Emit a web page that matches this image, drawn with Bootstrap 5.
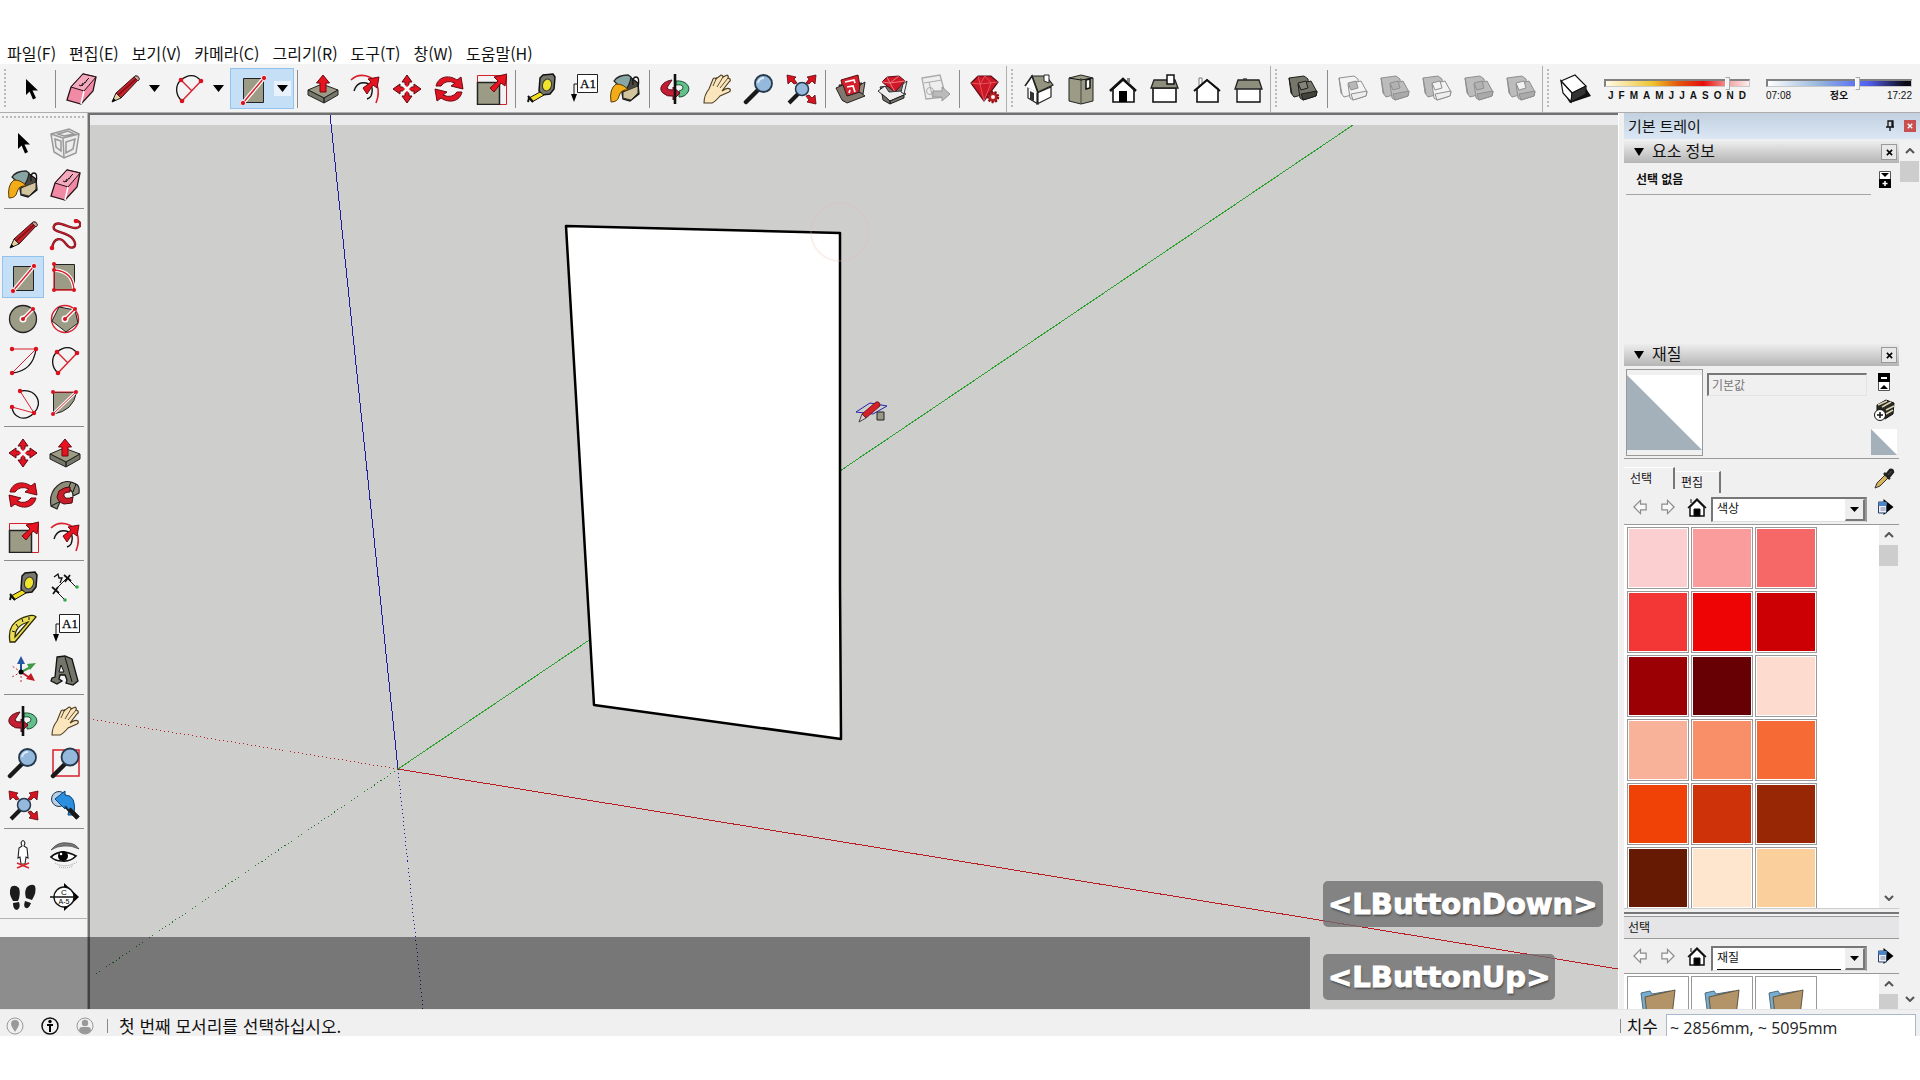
<!DOCTYPE html>
<html lang="ko">
<head>
<meta charset="utf-8">
<meta name="viewport" content="width=device-width, initial-scale=1">
<title>SketchUp</title>
<link href="https://cdn.jsdelivr.net/npm/bootstrap@5.3.0/dist/css/bootstrap.min.css" rel="stylesheet">
<style>
:root{--face:#f3f3f3;--pane:#f1f0f1;--rule:#8c8c8c}
body{font-family:"Noto Sans","Noto Sans CJK KR",sans-serif;color:#111;background:#fff;line-height:1.2;overflow:hidden}
.app{height:100vh;padding:40px 0 44px}
.menubar{height:24px;gap:13px;padding:1px 7px 0;font-family:"Noto Sans CJK KR",sans-serif;font-size:16px}
.menubar a{color:#111;text-decoration:none;line-height:24px}
.toolstrip{height:49px;padding-top:1px;background:var(--face);border-bottom:1px solid #adadad}
.tool{width:42px;height:42px;padding:0;border:0;background:none;flex:none;display:flex;align-items:center;justify-content:center;color:#111}
.tool svg{width:32px;height:32px;overflow:visible}
.split{width:64px;height:41px;flex:none;border:1px solid transparent}
.split .tool{width:43px;height:39px}
.split .drop{width:17px;height:15px;border:0;padding:0;background:none;display:flex;align-items:center;justify-content:center}
.split.active,.palette .tool.active{background:#c5dff6;border:1px solid #93c3ec}
.split.active .drop{background:#e9f2fb}
.vsep{width:8px;height:38px;flex:none;background:linear-gradient(var(--rule),var(--rule)) 3px 0/1px 100% no-repeat}
.grp{width:12px;height:46px;flex:none;border-left:1px solid #b0b0b0}
.vgrip{width:2px;height:40px;background:repeating-linear-gradient(#b9b9b9 0 2px,transparent 2px 4px)}
.hgrip{height:2px;background:repeating-linear-gradient(90deg,#b9b9b9 0 2px,transparent 2px 4px)}
.sun{width:146px;font:bold 10px/12px "Liberation Sans","Noto Sans CJK KR",sans-serif}
.sun input{appearance:none;-webkit-appearance:none;display:block;width:100%;height:14px;margin:0;background:none}
.sun input::-webkit-slider-runnable-track{height:8px;border:1px solid #c9c9c9;border-top:2px solid #808080;border-left:2px solid #808080}
.sun input::-webkit-slider-thumb{-webkit-appearance:none;width:5px;height:13px;margin-top:-4px;background:#f4f4f4;border:1px solid #aaa;border-left-color:#fff}
#month::-webkit-slider-runnable-track{background:linear-gradient(90deg,#fffbe8,#eec22c 33%,#e4590c 50%,#e60d0d 68%,#f3a3a3 86%,#fdecec)}
#hour::-webkit-slider-runnable-track{background:linear-gradient(90deg,#fff,#97b8dc 35%,#5e78f0 60%,#5360ee 70%,#0a0a14 96%)}
.work{min-height:0}
.palette{width:88px;background:var(--face);border-right:1px solid #b5b5b5;flex:none}
.palette .inner{padding:3px 1px 0 2px;border-bottom:1px solid #b5b5b5}
.palette .hgrip{margin:0 2px 4px 0}
.hsep{height:8px;background:linear-gradient(var(--rule),var(--rule)) 2px 2px/80px 1px no-repeat}
.stage{background:#cececd;border-left:2px solid #707070;border-top:2px solid #707070;min-width:0}
.stage .strip{position:absolute;inset:0 0 auto 0;height:10px;background:#ececef}
.stage>svg{position:absolute;inset:0;width:100%;height:100%}
.caption-band{position:absolute;left:0;bottom:0;width:1310px;height:72px;background:rgba(0,0,0,.42)}
.keys{position:absolute;right:317px;bottom:9px;width:280px;gap:27px}
.keycap{background:rgba(110,110,110,.78);border-radius:5px;color:#fff;font:bold 29px/42px "DejaVu Sans",sans-serif;padding:2px 5px;text-shadow:1px 2px 2px rgba(50,50,50,.7);-webkit-text-stroke:1px #fff}
.tray{width:302px;flex:none;background:var(--pane);border-left:1px solid #fff;padding-left:5px}
.tray-title{height:26px;margin-bottom:2px;flex:none;background:linear-gradient(#c2d0df,#dbe7f5);font-size:15px;padding:0 4px 0 4px}
.tray-body{width:275px}
.tray-body>*{flex-shrink:0}
.xbtn{border:1px solid #999;background:#e8e8e8;width:16px;height:16px;padding:0;display:flex;align-items:center;justify-content:center}
.xbtn.hot{background:#c75050;border:0;width:12px;height:12px}
.section-head{height:22px;background:linear-gradient(#ededed,#b5b5b5);font-size:16px;padding:0 2px 0 10px;margin:0;font-weight:400}
.t12{font-size:12px;line-height:16px}
.plain{border:0;background:none;padding:0;display:flex;align-items:center;justify-content:center;flex:none}
.info{height:181px}
.info .rowline{margin-left:2px;height:32px;border-bottom:1px solid #a5a5a5;padding:3px 0 0 10px}
.preview{width:77px;height:87px;border:1px solid #999;padding:5px 0}
.matname{width:160px;height:23px;border:1px solid #e3e3e3;border-top:2px solid #777;border-left:2px solid #777;background:#f1f0f1;font-size:12px;padding:0 3px;color:#777}
.mat{height:93px;padding:3px 0 0 2px;border-bottom:1px solid #999}
.tabsrow{height:31px;padding-top:8px}
.tabsrow a{color:#111;text-decoration:none;padding:0 6px;height:22px;border-right:2px solid #777;border-top:1px solid #fff}
.tabsrow .tab-a{width:51px}.tabsrow .tab-b{width:46px}
.navrow{height:35px;padding:0 5px 0 5px;border-bottom:1px solid #999}
.combo{height:25px;width:156px;border:2px solid #777;border-right-color:#999;border-bottom:1px solid #ddd;background:#fff}
.combo select{appearance:none;-webkit-appearance:none;border:0;background:#fff;font-size:12px;padding:0 0 0 4px;flex:1;min-width:0;color:#111;outline:0;height:22px}
.combo .arrow{width:20px;border:1px solid #eee;border-right:2px solid #777;border-bottom:2px solid #777;background:#eee}
.combo.focused select{border-bottom:1px solid #111;margin:0 4px 0 4px;padding:0}
.well{background:#fff;overflow:hidden}
.well-main{height:383px}
.well.well-rest{flex:1 1 0;min-height:0}
.splitter{height:8px;border-top:1px solid #ccc}
.splitter div{height:2px;background:#777}
.subhead{height:23px;background:#e5e4e6;border-top:1px solid #999;border-bottom:1px solid #999}
.swatches{width:195px;padding:2px 0 0 3px;gap:2px;align-content:flex-start}
.sw{width:62px;height:62px;border:1px solid #999;padding:1px;background:#fff;flex:none}
.sw span{display:block;width:100%;height:100%}
.bar{width:20px;background:#f1f1f1;flex:none}
.bar .thumb{width:19px;height:21px;background:#cdcdcd}
.bar .end{height:20px;flex:none}
.status{height:27px;padding-top:5px;background:var(--pane);border-top:1px solid #e5e5e5;font-family:"Noto Sans CJK KR",sans-serif;overflow:hidden}
.status .icons{gap:17px;padding-left:6px}
.status .msg{font-size:17px;line-height:26px}
.status .tick{width:1px;height:14px;background:#888;margin:0 11px 0 13px}
.status .tick.end{margin:0 6px}
.status input{width:250px;height:28px;border:1px solid #a9b9cc;background:#fff;font:16px/24px "Open Sans",sans-serif;padding:0 3px;color:#222}
.s{fill:none;stroke:#111}.r{fill:none;stroke:#d8202c}.rd{fill:#d8121e}.tp{fill:#9c9c86;stroke:#222}
.sol-on{--a:#77766a;--b:#77766a;--c:#44433b;--d:#85847a;--k:#1d1d1a}
.sol-int{--a:#f3f3f3;--b:#f3f3f3;--c:#eee;--d:#b8b8b8;--k:#8f8f8f}
.sol-uni{--a:#bcbcbc;--b:#bcbcbc;--c:#aaa;--d:#b2b2b2;--k:#8f8f8f}
.sol-sub{--a:#bcbcbc;--b:#f3f3f3;--c:#eee;--d:#f3f3f3;--k:#8f8f8f}
.sol-spl{--a:#bcbcbc;--b:#bcbcbc;--c:#aaa;--d:#f3f3f3;--k:#8f8f8f}
</style>
<script src="https://cdn.jsdelivr.net/npm/bootstrap@5.3.0/dist/js/bootstrap.bundle.min.js"></script>
</head>
<body>
<svg width="0" height="0" class="position-absolute" aria-hidden="true">
<defs>
<symbol id="i-sel" viewBox="0 0 32 32"><path d="M11 6V22l3.600-3.500L18 26.500l3-1.500-3.500-7.500h5.500z"/></symbol>
<symbol id="i-eraser" viewBox="0 0 32 32"><path d="M18 1l13 3-3 14-12 13L2 27l4-13z" fill="#f08aa5" stroke="#2a1218" stroke-width="1.300"/><path d="M18 1l13 3-12 14-13-4z" fill="#f4a9bd" stroke="#2a1218"/><path d="M19 18l-3 13" stroke="#fff" stroke-width="1.500"/><path d="M14 12l2 1 2-3m-1 3l3-4m0 1l2-3m-1 1l3-3" class="s" stroke="#702"/></symbol>
<symbol id="i-pencil" viewBox="0 0 32 32"><path d="M7 20L26 3q3-1 4 3L12 25z" fill="#c6202b" stroke="#2a1010"/><path d="M3 29l4-9 5 5z" fill="#e5cf9d" stroke="#222"/><path d="M3 29l1.500-4 2.500 2.500z"/><path d="M9 22L27 6" stroke="#7b0f15" stroke-width="1.500"/><path d="M25 4l4 4 1.500-2q-1-4-4-3z" fill="#d99" stroke="#333"/></symbol>
<symbol id="i-free" viewBox="0 0 32 32"><path id="fr" d="M3 29C5 18 12 18 17 25S30 28 24 20 2 14 5 7s15 3 22 2 4-7 1-7" fill="none" stroke="#7d1420" stroke-width="2.400"/><path d="M3 29C5 18 12 18 17 25S30 28 24 20 2 14 5 7s15 3 22 2 4-7 1-7" fill="none" stroke="#d8202c"/><circle class="rd" cx="3" cy="29" r="2.300"/><circle class="rd" cx="27" cy="2" r="2.300"/></symbol>
<symbol id="i-arc" viewBox="0 0 32 32"><path d="M9 28C2 22 2 12 8 7S22 0 28 8" class="s" stroke-width="1.300"/><path d="M8 7l11 11M28 8L9 28" class="r" stroke-width="1.400"/><g class="rd"><circle cx="8" cy="7" r="2.300"/><circle cx="28" cy="8" r="2.300"/><circle cx="9" cy="28" r="2.300"/></g></symbol>
<symbol id="i-rect" viewBox="0 0 32 32"><path class="tp" d="M6.500 5.500h20v24h-20z"/><path d="M6 30L27 5" stroke="#fff" stroke-width="4"/><path d="M6 30L27 5" class="r" stroke-width="1.500"/><g class="rd" stroke="#fff" stroke-width=".8"><circle cx="6" cy="30" r="2.600"/><circle cx="27" cy="5" r="2.600"/></g></symbol>
<symbol id="i-rrect" viewBox="0 0 32 32"><path class="tp" d="M5.500 3.500h20v25h-20z"/><path d="M5 9q19 1 20 20" fill="none" stroke="#fff" stroke-width="3.500"/><path d="M5 3v26h20Q24 10 5 9" class="r" stroke-width="1.300"/><g class="rd"><circle cx="5" cy="3" r="2"/><circle cx="5" cy="9" r="2"/><circle cx="5" cy="29" r="2"/><circle cx="25" cy="29" r="2"/></g></symbol>
<symbol id="i-circle" viewBox="0 0 32 32"><circle class="tp" cx="16" cy="16" r="13.500" stroke-width="1.300"/><path d="M16 16L26 6" stroke="#fff" stroke-width="4"/><circle cx="16" cy="16" r="3.500" fill="#fff"/><path d="M16 16L26 6" class="r" stroke-width="1.500"/><circle class="rd" cx="16" cy="16" r="2"/><circle class="rd" cx="26" cy="6" r="2"/></symbol>
<symbol id="i-poly" viewBox="0 0 32 32"><circle class="r" cx="16" cy="16" r="13.500" stroke-width="1.400"/><path class="tp" d="M10 4l16 3 3 13-12 9L3 18z"/><path d="M16 16L26 6" stroke="#fff" stroke-width="4"/><circle cx="16" cy="16" r="3.500" fill="#fff"/><path d="M16 16L26 6" class="r" stroke-width="1.500"/><circle class="rd" cx="16" cy="16" r="2"/><circle class="rd" cx="26" cy="6" r="2"/></symbol>
<symbol id="i-arc1" viewBox="0 0 32 32"><path d="M29 4Q26 26 5 28" class="s" stroke-width="1.300"/><path d="M5 4h24L5 28" class="r"/><g class="rd"><circle cx="5" cy="4" r="2.200"/><circle cx="29" cy="4" r="2.200"/><circle cx="5" cy="28" r="2.200"/></g></symbol>
<symbol id="i-arc3" viewBox="0 0 32 32"><path d="M13 4c16-3 24 12 14 22S6 30 5 20" class="s" stroke-width="1.300"/><path d="M13 4l14 22L5 20" class="r"/><g class="rd"><circle cx="13" cy="4" r="2.200"/><circle cx="5" cy="20" r="2.200"/><circle cx="27" cy="26" r="2.200"/></g></symbol>
<symbol id="i-pie" viewBox="0 0 32 32"><path class="tp" d="M4.500 5.500h23Q24 24 4.500 27z"/><path d="M4 27L27 5" stroke="#fff" stroke-width="3"/><path d="M4 5h23L4 27" class="r"/><g class="rd"><circle cx="4" cy="5" r="2"/><circle cx="27" cy="5" r="2"/><circle cx="4" cy="27" r="2"/></g></symbol>
<symbol id="i-move" viewBox="0 0 32 32"><path d="M16 2l5 7h-3v5h5v-3l7 5-7 5v-3h-5v5h3l-5 7-5-7h3v-5H9v3l-7-5 7-5v3h5V9h-3z" fill="#e01422" stroke="#5a0a10"/><path d="M11 11l10 10m0-10L11 21" stroke="#f7f7f7" stroke-width="2.600"/></symbol>
<symbol id="i-push" viewBox="0 0 32 32"><path d="M1 17l14-6 16 6-14 8z" fill="#9c9c86" stroke="#222"/><path d="M1 17v5l16 8v-5zM31 17v5l-14 8v-5z" fill="#77786a" stroke="#222"/><path d="M13 19V10H9.500L16 2l6.500 8H19v9z" fill="#e8131f" stroke="#6b0a10"/></symbol>
<symbol id="i-rot" viewBox="0 0 32 32"><path d="M3 13C5 4 15 1 24 7l4-3 2 12-12-3 4-3Q13 6 8 13zM29 19C27 28 17 31 8 25l-4 3-2-12 12 3-4 3q9 4 14-3z" fill="#e01422" stroke="#6b0a10"/></symbol>
<symbol id="i-follow" viewBox="0 0 32 32"><path d="M2 27C-1 10 14-3 27 5q4 2 3 9l-6 3q0-7-6-6-9 3-7 12l-3 7z" fill="#8d8d7a" stroke="#222" stroke-width="1.200"/><path d="M22 3l-3 7m8-5l-3 8M2 27l8-4" class="s"/><path d="M10 12q5-4 11-4v5q-7 0-6 4t9 1l-1 6-8 1q-6-2-7-7z" fill="#c81d28" stroke="#4b0a0e"/></symbol>
<symbol id="i-scale" viewBox="0 0 32 32"><path d="M2.500 2.500h29v29h-29z" class="r"/><path class="tp" d="M2.500 9.500h22v22h-22z" stroke-width="1.500"/><path d="M15 15l8-7-4-4L32 1l-2 12-4-3-7 9z" fill="#e8131f" stroke="#6b0a10"/></symbol>
<symbol id="i-off" viewBox="0 0 32 32"><path d="M2 7C10-1 24 2 28 12q3 8-1 18" class="r" stroke-width="1.600"/><path d="M5 18Q8 8 17 10t5 13q-1 2-4 3" class="s" stroke-width="1.400"/><path d="M14 15l8-6-3-3 11-2-2 11-4-3-6 9z" fill="#e8131f" stroke="#6b0a10"/></symbol>
<symbol id="i-tape" viewBox="0 0 32 32"><path d="M15 5l3-3 10-1 2 3-1 12-4 5-8 1-3-4z" fill="#77776e" stroke="#111" stroke-width="1.500"/><ellipse cx="22" cy="12" rx="4.500" ry="6" transform="rotate(15 22 12)" fill="#f1e52c" stroke="#333"/><path d="M15 19l4 3L7 29l-3-4z" fill="#f2dd25" stroke="#111"/><path d="M3 23l5 6m-4-4l-1 4" stroke="#111" stroke-width="2"/></symbol>
<symbol id="i-dim" viewBox="0 0 32 32"><path d="M6 19L18 7M6 19l9 9M18 7l9 9" class="s"/><path d="M3 16l7 6m-6 1l5-7M15 4l7 6m-6 1l5-7" class="s" stroke-width="1.700"/><path d="M5 6l4-3 1 4 3 0-2 5" class="s" stroke-width="1.300"/><circle cx="16" cy="29" r="1.800" fill="#3a4"/><circle cx="28" cy="16" r="1.800" fill="#3a4"/></symbol>
<symbol id="i-prot" viewBox="0 0 32 32"><path d="M3 29Q0 12 13 6T29 4L8 29zM8 24Q8 13 21 9z" fill="#e9dd55" fill-rule="evenodd" stroke="#2b2800" stroke-width="1.300"/><path d="M5 18l3 1m1-8l2 3m4-8l1 3m6-5l0 3" class="s"/></symbol>
<symbol id="i-text" viewBox="0 0 32 32"><path d="M10.500 1.500h20v18h-20z" fill="#fff" stroke="#222"/><path d="M10 11H7v12" class="s"/><path d="M4 21h6l-3 8z"/><text x="13" y="15" font-family="Liberation Serif,serif" font-size="13" stroke="#111" stroke-width=".3">A1</text></symbol>
<symbol id="i-axes" viewBox="0 0 32 32"><path d="M14 17V6" stroke="#1f4f93" stroke-width="2"/><path d="M10 9l4-8 4 8z" fill="#2757a0"/><path d="M14 17l10-5" stroke="#3d9a45" stroke-width="2"/><path d="M20 9l9-1-6 7z" fill="#3d9a45"/><path d="M14 17l9 6" stroke="#c11b25" stroke-width="2"/><path d="M24 18l4 8-9-2z" fill="#c11b25"/><path d="M14 17L5 11M14 17L5 22M14 17v11" stroke="#b33" stroke-dasharray="2 2"/><circle cx="14" cy="17" r="2.500"/></symbol>
<symbol id="i-3d" viewBox="0 0 32 32"><path d="M8 2l8-1 7 3 6 22-5 4-7-2 1-3-2-5h-5l-1 4 3 2-5 3-6-3 1-3 3-1z" fill="#74756a" stroke="#111" stroke-width="1.300"/><path d="M12 10l3 7h-5z" fill="#f3f3f3" stroke="#111"/><path d="M16 2l7 25" class="s"/></symbol>
<symbol id="i-orbit" viewBox="0 0 32 32"><path d="M17 8c10-1 15 6 12 11q-3 5-9 5v-6q5-1 4-4t-7-2z" fill="#63c08b" stroke="#174d2d"/><path d="M13 7C1 9 0 17 4 20q4 4 10 3l0 4 7-7-7-6 0 3q-8 0-5-4z" fill="#c21f35" stroke="#5b0c18"/><path d="M16 1v30" stroke="#111" stroke-width="2.600"/></symbol>
<symbol id="i-hand" viewBox="0 0 32 32"><path d="M3 30q0-8 5-14L12 6q2-2 3 0l5-4q2 0 2 2l4-2q2 1 1 3l2 1q1 2-1 3l-7 9q5-4 8-2 1 2-1 3l-9 4q-5 6-8 7z" fill="#fbe5bd" stroke="#4b3c22" stroke-width="1.100"/><path d="M12 13l4-9m0 10l6-10m-3 11l8-10" stroke="#4b3c22" fill="none" stroke-width=".9"/></symbol>
<symbol id="i-zoom" viewBox="0 0 32 32"><path d="M3 29l12-12" stroke="#191919" stroke-width="4.500" stroke-linecap="round"/><circle cx="20.500" cy="10.500" r="8.500" fill="#94b9dc" stroke="#26384c" stroke-width="1.800"/><path d="M15 10q1-5 6-5" fill="none" stroke="#dceafa" stroke-width="1.800"/></symbol>
<symbol id="i-zwin" viewBox="0 0 32 32"><path d="M4 3h26v26H4z" class="r" stroke-width="1.500"/><path d="M4 29l12-12" stroke="#191919" stroke-width="4.500" stroke-linecap="round"/><circle cx="21" cy="10" r="8.500" fill="#94b9dc" stroke="#26384c" stroke-width="1.800"/></symbol>
<symbol id="i-zext" viewBox="0 0 32 32"><path d="M4 30l9-9" stroke="#191919" stroke-width="4"/><circle cx="17" cy="16" r="6.500" fill="#94b9dc" stroke="#26384c" stroke-width="1.500"/><path d="M2 2l9 2-2 2 3 4-3 1-3-3-3 3zM31 2l-9 2 2 2-3 4 3 1 3-3 3 3zM31 31l-9-2 2-2-3-4 3-1 3 3 3-3z" fill="#d8121e" stroke="#5a0a10" stroke-width=".8"/></symbol>
<symbol id="i-zprev" viewBox="0 0 32 32"><circle cx="10" cy="10" r="7.500" fill="#b5cfe9" stroke="#26384c"/><path d="M15 15l14 14" stroke="#191919" stroke-width="4.500"/><path d="M6 10L16 2v4q12 0 9 20h-6q2-7-3-9v3z" fill="#2b8fe0" stroke="#0d4377"/><path d="M20 20l9 9" stroke="#191919" stroke-width="4.500"/></symbol>
<symbol id="i-person" viewBox="0 0 32 32"><path d="M14 4q2-5 4 0l-1 3 3 2 1 10-2-1-1 7h-4l-1-7-2 1 1-10 3-2z" fill="#fff" stroke="#222" stroke-width="1.100"/><path d="M10 29l12-5M22 29l-12-5" class="r" stroke-width="1.500"/></symbol>
<symbol id="i-eye" viewBox="0 0 32 32"><path d="M2 11Q9 2 19 4q7 0 11 6-8-4-15-3Q8 7 2 11z" fill="#777" stroke="#222" stroke-width=".6"/><path d="M2 18Q12 9 27 17q-6 6-14 5-7 0-11-4z" fill="#fff" stroke="#111" stroke-width="1.700"/><circle cx="14" cy="17" r="5"/><circle cx="12" cy="15" r="1.300" fill="#fff"/><path d="M6 24q10 6 22-1m-18 5q8 2 14-1" fill="none" stroke="#999" stroke-dasharray="1 1"/></symbol>
<symbol id="i-feet" viewBox="0 0 32 32"><path d="M4 6q4-3 8 1 2 6-1 13H6Q1 12 4 6zM20 6q5-4 8-1 2 6-3 14l-6-2q-2-7 1-11zM6 22l6-1q2 6-2 8-4 0-4-7zM18 20l6 2q-2 6-5 5-3-1-1-7z" fill="#1c1c1c"/></symbol>
<symbol id="i-sect" viewBox="0 0 32 32"><path d="M15 2l15 14-15 14z"/><circle cx="15" cy="16" r="10" fill="#fff" stroke="#111" stroke-width="1.300"/><path d="M1 16h26" class="s" stroke-width="1.500"/><text x="15" y="14" text-anchor="middle" font-family="Liberation Sans" font-size="8">C</text><text x="15" y="23" text-anchor="middle" font-family="Liberation Sans" font-size="7">A-5</text></symbol>
<symbol id="i-bucket" viewBox="0 0 32 32"><path d="M11 7l10-3 8 6 1 11-9 7-7-2z" fill="#4a4840" stroke="#111" stroke-width="1.300"/><path d="M14 19l15-6v7l-7 7-8-2z" fill="#d2c49d" stroke="#333"/><path d="M5 8q4-6 14-6l3 2q-1 9-7 14z" fill="#87a5a3" stroke="#222" stroke-width="1.300"/><path d="M2 29q-2-13 5-18 8 0 12 6-7-1-9 6-1 6-8 6z" fill="#f2ac18" stroke="#5b3b05"/><path d="M24 12q-1-8 3-8t2 10" class="s" stroke-width="1.300"/></symbol>
<symbol id="i-comp" viewBox="0 0 32 32"><path d="M2 7l18-5 10 5-3 19-12 5L5 25z" fill="#ececec" stroke="#999" stroke-width="1.500"/><path d="M2 7l12 4 16-4M14 11l1 20M6 12l6 2v10l-5-4zM17 15l9-3-2 10-7 4zM9 7l10-3 6 3-10 2z" fill="none" stroke="#999" stroke-width="1.500"/></symbol>
<symbol id="i-box1" viewBox="0 0 32 32"><path d="M4 12l4 16 18-4 1-14z" fill="#57514c" stroke="#222"/><path d="M6 7l17-5 3 17-16 5z" fill="#d4202c" stroke="#5b0b10"/><path d="M10 9l9-2 1 3M12 14l6-1 2 6M14 20l1-3" fill="none" stroke="#fff" stroke-width="1.700"/><path d="M1 15l7-3 4 11 13-4 5 4-18 7-5-3z" fill="#81776c" stroke="#222"/><path d="M25 12l5-3-2 12-4-2z" fill="#9c8f80" stroke="#222"/></symbol>
<symbol id="i-box2" viewBox="0 0 32 32"><path d="M3 14l5 14 17-4 3-13z" fill="#77716b" stroke="#222"/><path d="M5 9l5-5 12-1 6 5-10 11z" fill="#cf1828" stroke="#5b0b10"/><path d="M5 9l8 1 15-2M13 10l5 9M10 4l3 6 9-7" fill="none" stroke="#f17a80"/><path d="M1 18l7-5 4 6 12-1 5 3-16 7z" fill="#eee" stroke="#333"/><path d="M26 11l4-3-3 13-3-2z" fill="#eee" stroke="#333"/><path d="M5 21l8 7v3l-7-4zM13 28l14-6v3l-14 6z" fill="#77716b" stroke="#222"/></symbol>
<symbol id="i-lay" viewBox="0 0 32 32"><path d="M3 5l18-3 6 22-20 2z" fill="#eee" stroke="#aaa" stroke-width="1.300"/><path d="M5 10l18-3M10 9l4 17" stroke="#aaa"/><circle cx="11" cy="18" r="3.500" fill="none" stroke="#aaa"/><path d="M14 18h9v-4l8 7-8 7v-4h-9z" fill="#bbb" stroke="#999"/></symbol>
<symbol id="i-gem" viewBox="0 0 32 32"><path d="M2 10l7-7h13l7 6-14 19z" fill="#cc1726" stroke="#520911" stroke-width="1.200"/><path d="M2 10l9 1 18-2M11 11l4 17 7-18M9 3l2 8 5-8 6 7" fill="none" stroke="#f06a74" stroke-width=".7"/><circle cx="24" cy="24" r="5" fill="#b22" stroke="#8b1018" stroke-dasharray="2 1.500" stroke-width="2.500"/><circle cx="24" cy="24" r="2" fill="#f3f3f3"/></symbol>
<symbol id="i-iso" viewBox="0 0 32 32"><path d="M5 14l10 5v12L5 25zM14 20l14-6v10l-14 7z" fill="#fff" stroke="#222" stroke-width="1.200"/><path d="M9 3l14 0 7 9-15 7z" fill="#93937f" stroke="#222" stroke-width="1.200"/><path d="M2 13l7-10 6 17" fill="#fff" stroke="#222" stroke-width="1.600"/><path d="M7 18l4 2v8l-4-2z" fill="#333"/><path d="M21 2h5v8l-5-2z" fill="#fff" stroke="#222"/></symbol>
<symbol id="i-top" viewBox="0 0 32 32"><path d="M4 5l12-3 12 3v23l-12 3-12-3z" fill="#9c9c86" stroke="#222"/><path d="M16 5v26" stroke="#444"/><path d="M4 5l12 2 12-2" class="s"/><path d="M21 7l4-1v9l-4 1z" fill="#fff" stroke="#111" stroke-width="1.500"/></symbol>
<symbol id="i-front" viewBox="0 0 32 32"><path d="M6 16v13h21V16L16 7z" fill="#fff" stroke="#111" stroke-width="1.600"/><path d="M3 18L16 6l13 12" class="s" stroke-width="2.600"/><path d="M12 18h8v11h-8z"/><path d="M20 5h3v6l-3-3z" fill="#888"/></symbol>
<symbol id="i-right" viewBox="0 0 32 32"><path d="M4 15h23v14H4z" fill="#fff" stroke="#111" stroke-width="1.600"/><path d="M5 7h21l3 8H2z" fill="#8e8e7c" stroke="#222" stroke-width="1.300"/><path d="M18 2h7v9h-7z" fill="#fff" stroke="#111" stroke-width="1.500"/></symbol>
<symbol id="i-back" viewBox="0 0 32 32"><path d="M8 5h3v8H8z" fill="#fff" stroke="#777"/><path d="M6 16v13h21V16L16 7z" fill="#fff" stroke="#111" stroke-width="1.600"/><path d="M3 18L16 7l13 11" class="s" stroke-width="2"/></symbol>
<symbol id="i-left" viewBox="0 0 32 32"><path d="M10 5h4v3h-4z" fill="#777"/><path d="M4 15h23v14H4z" fill="#fff" stroke="#111" stroke-width="1.400"/><path d="M5 7h21l3 9H2z" fill="#8e8e7c" stroke="#222" stroke-width="1.300"/></symbol>
<symbol id="i-sol" viewBox="0 0 32 32"><path d="M2 5l15-2 4 3 1 14-15 4-3-4z" fill="var(--a)" stroke="var(--k)"/><path d="M2 5l3 16" stroke="var(--k)"/><path d="M11 11l13-3 6 11-1 4-13 4-3-2z" fill="var(--b)" stroke="var(--k)"/><path d="M14 21l16-3-1 5-13 4z" fill="var(--c)" stroke="var(--k)"/><path d="M11 10l8-2 2 7-7 2z" fill="var(--d)" stroke="var(--k)"/></symbol>
<symbol id="i-shade" viewBox="0 0 32 32"><path d="M9 27l-3-8 20-5 6 9-9 3-12 4z" fill="#111"/><path d="M2 8L16 2l11 11-14 7z" fill="#fff" stroke="#111" stroke-width="1.200"/><path d="M2 8l2 12 8 9 1-9z" fill="#fff" stroke="#111" stroke-width="1.200"/><path d="M13 20l14-7v8l-15 8z" fill="#333" stroke="#111"/></symbol>
<symbol id="i-prevn" viewBox="0 0 16 16"><path d="M1 8l7-7v4h6v6H8v4z" fill="#f8f8f8" stroke="#8c8c8c" stroke-width="1.300"/></symbol>
<symbol id="i-nextn" viewBox="0 0 16 16"><path d="M15 8L8 1v4H2v6h6v4z" fill="#f8f8f8" stroke="#8c8c8c" stroke-width="1.300"/></symbol>
<symbol id="i-home" viewBox="0 0 20 20"><path d="M3 10v9h14v-9l-7-7z" fill="#fff" stroke="#111" stroke-width="1.500"/><path d="M1 11L10 2l9 9" class="s" stroke-width="1.500"/><path d="M4 6V2M7 12h6v7H7z" stroke="#111"/></symbol>
<symbol id="i-detail" viewBox="0 0 16 18"><path d="M6 1l10 8-10 8z"/><path d="M1 4h8v11H1z" fill="#eef" stroke="#25415f"/><path d="M1 4h8v4H1z" fill="#4b85c6"/><path d="M3 10h5M3 12h5" stroke="#789"/></symbol>
<symbol id="i-tri" viewBox="0 0 10 6" preserveAspectRatio="none"><path d="M0 0h10L5 6z"/></symbol>
<symbol id="i-x" viewBox="0 0 8 8"><path d="M1 1l6 6M7 1L1 7" fill="none" stroke="currentColor" stroke-width="1.800"/></symbol>
<symbol id="i-up" viewBox="0 0 10 6"><path d="M1 5l4-4 4 4" fill="none" stroke="#555" stroke-width="2"/></symbol>
<symbol id="i-dn" viewBox="0 0 10 6"><path d="M1 1l4 4 4-4" fill="none" stroke="#555" stroke-width="2"/></symbol>
<symbol id="i-diag" viewBox="0 0 76 76" preserveAspectRatio="none"><path d="M0 0h76v76z" fill="#fff"/><path d="M0 0v76h76z" fill="#a4b1bb"/></symbol>
<symbol id="i-folder" viewBox="0 0 36 40"><path d="M1 4l9-2 2 3 18-3-4 26H4z" fill="#79add0" stroke="#4c6b80"/><path d="M5 8l30-7-3 26-24 8z" fill="#b39468" stroke="#60553f"/></symbol>
</defs>
</svg>

<div class="app d-flex flex-column">
<nav class="menubar d-flex flex-shrink-0" aria-label="메뉴">
<a href="#">파일(F)</a><a href="#">편집(E)</a><a href="#">보기(V)</a><a href="#">카메라(C)</a><a href="#">그리기(R)</a><a href="#">도구(T)</a><a href="#">창(W)</a><a href="#">도움말(H)</a>
</nav>

<div class="toolstrip d-flex align-items-center flex-shrink-0" role="toolbar">
<div class="vgrip ms-1 me-1"></div>
<button class="tool" aria-label="선택"><svg><use href="#i-sel"/></svg></button><span class="vsep"></span>
<button class="tool" aria-label="지우기"><svg><use href="#i-eraser"/></svg></button>
<div class="split d-flex align-items-center"><button class="tool" aria-label="선"><svg><use href="#i-pencil"/></svg></button><button class="drop" aria-label="선 메뉴"><svg width="11" height="7"><use href="#i-tri"/></svg></button></div>
<div class="split d-flex align-items-center"><button class="tool" aria-label="호"><svg><use href="#i-arc"/></svg></button><button class="drop" aria-label="호 메뉴"><svg width="11" height="7"><use href="#i-tri"/></svg></button></div>
<div class="split active d-flex align-items-center"><button class="tool" aria-label="직사각형"><svg><use href="#i-rect"/></svg></button><button class="drop" aria-label="도형 메뉴"><svg width="11" height="7"><use href="#i-tri"/></svg></button></div>
<span class="vsep"></span>
<button class="tool" aria-label="밀기/끌기"><svg><use href="#i-push"/></svg></button>
<button class="tool" aria-label="오프셋"><svg><use href="#i-off"/></svg></button>
<button class="tool" aria-label="이동"><svg><use href="#i-move"/></svg></button>
<button class="tool" aria-label="회전"><svg><use href="#i-rot"/></svg></button>
<button class="tool" aria-label="배율"><svg><use href="#i-scale"/></svg></button>
<span class="vsep"></span>
<button class="tool" aria-label="줄자"><svg><use href="#i-tape"/></svg></button>
<button class="tool" aria-label="텍스트"><svg><use href="#i-text"/></svg></button>
<button class="tool" aria-label="페인트통"><svg><use href="#i-bucket"/></svg></button>
<span class="vsep"></span>
<button class="tool" aria-label="궤도"><svg><use href="#i-orbit"/></svg></button>
<button class="tool" aria-label="이동 보기"><svg><use href="#i-hand"/></svg></button>
<button class="tool" aria-label="확대/축소"><svg><use href="#i-zoom"/></svg></button>
<button class="tool" aria-label="범위 확대"><svg><use href="#i-zext"/></svg></button>
<span class="vsep"></span>
<button class="tool" aria-label="3D Warehouse"><svg><use href="#i-box1"/></svg></button>
<button class="tool" aria-label="Extension Warehouse"><svg><use href="#i-box2"/></svg></button>
<button class="tool" aria-label="LayOut"><svg><use href="#i-lay"/></svg></button>
<span class="vsep"></span>
<button class="tool" aria-label="확장 관리자"><svg><use href="#i-gem"/></svg></button>
<div class="grp d-flex align-items-center ps-1"><div class="vgrip"></div></div>
<button class="tool" aria-label="등각투영"><svg><use href="#i-iso"/></svg></button>
<button class="tool" aria-label="상단"><svg><use href="#i-top"/></svg></button>
<button class="tool" aria-label="정면"><svg><use href="#i-front"/></svg></button>
<button class="tool" aria-label="우측"><svg><use href="#i-right"/></svg></button>
<button class="tool" aria-label="후면"><svg><use href="#i-back"/></svg></button>
<button class="tool" aria-label="좌측"><svg><use href="#i-left"/></svg></button>
<div class="grp d-flex align-items-center ps-1"><div class="vgrip"></div></div>
<button class="tool sol-on" aria-label="외부 셸"><svg><use href="#i-sol"/></svg></button>
<span class="vsep"></span>
<button class="tool sol-int" aria-label="교차"><svg><use href="#i-sol"/></svg></button>
<button class="tool sol-uni" aria-label="결합"><svg><use href="#i-sol"/></svg></button>
<button class="tool sol-sub" aria-label="빼기"><svg><use href="#i-sol"/></svg></button>
<button class="tool sol-uni" aria-label="트림"><svg><use href="#i-sol"/></svg></button>
<button class="tool sol-spl" aria-label="분할"><svg><use href="#i-sol"/></svg></button>
<div class="grp d-flex align-items-center ps-1"><div class="vgrip"></div></div>
<button class="tool me-1" aria-label="그림자"><svg><use href="#i-shade"/></svg></button>
<div class="sun ms-1"><input type="range" id="month" min="0" max="100" value="86" aria-label="날짜"><label for="month" class="d-flex justify-content-between px-1"><span>J</span><span>F</span><span>M</span><span>A</span><span>M</span><span>J</span><span>J</span><span>A</span><span>S</span><span>O</span><span>N</span><span>D</span></label></div>
<div class="sun ms-3"><input type="range" id="hour" min="0" max="100" value="63" aria-label="시간"><label for="hour" class="d-flex justify-content-between"><span class="fw-normal">07:08</span><span>정오</span><span class="fw-normal">17:22</span></label></div>
</div>

<div class="work d-flex flex-grow-1 position-relative">
<aside class="palette">
<div class="inner">
<div class="hgrip"></div>
<div class="d-flex flex-wrap">
<button class="tool" aria-label="선택"><svg><use href="#i-sel"/></svg></button><button class="tool" aria-label="구성 요소"><svg><use href="#i-comp"/></svg></button>
<button class="tool" aria-label="페인트통"><svg><use href="#i-bucket"/></svg></button><button class="tool" aria-label="지우기"><svg><use href="#i-eraser"/></svg></button>
</div><div class="hsep"></div><div class="d-flex flex-wrap">
<button class="tool" aria-label="선"><svg><use href="#i-pencil"/></svg></button><button class="tool" aria-label="자유 곡선"><svg><use href="#i-free"/></svg></button>
<button class="tool active" aria-label="직사각형"><svg><use href="#i-rect"/></svg></button><button class="tool" aria-label="회전 직사각형"><svg><use href="#i-rrect"/></svg></button>
<button class="tool" aria-label="원"><svg><use href="#i-circle"/></svg></button><button class="tool" aria-label="다각형"><svg><use href="#i-poly"/></svg></button>
<button class="tool" aria-label="호"><svg><use href="#i-arc1"/></svg></button><button class="tool" aria-label="2점 호"><svg><use href="#i-arc"/></svg></button>
<button class="tool" aria-label="3점 호"><svg><use href="#i-arc3"/></svg></button><button class="tool" aria-label="파이"><svg><use href="#i-pie"/></svg></button>
</div><div class="hsep"></div><div class="d-flex flex-wrap">
<button class="tool" aria-label="이동"><svg><use href="#i-move"/></svg></button><button class="tool" aria-label="밀기/끌기"><svg><use href="#i-push"/></svg></button>
<button class="tool" aria-label="회전"><svg><use href="#i-rot"/></svg></button><button class="tool" aria-label="따라가기"><svg><use href="#i-follow"/></svg></button>
<button class="tool" aria-label="배율"><svg><use href="#i-scale"/></svg></button><button class="tool" aria-label="오프셋"><svg><use href="#i-off"/></svg></button>
</div><div class="hsep"></div><div class="d-flex flex-wrap">
<button class="tool" aria-label="줄자"><svg><use href="#i-tape"/></svg></button><button class="tool" aria-label="치수"><svg><use href="#i-dim"/></svg></button>
<button class="tool" aria-label="각도기"><svg><use href="#i-prot"/></svg></button><button class="tool" aria-label="텍스트"><svg><use href="#i-text"/></svg></button>
<button class="tool" aria-label="축"><svg><use href="#i-axes"/></svg></button><button class="tool" aria-label="3D 텍스트"><svg><use href="#i-3d"/></svg></button>
</div><div class="hsep"></div><div class="d-flex flex-wrap">
<button class="tool" aria-label="궤도"><svg><use href="#i-orbit"/></svg></button><button class="tool" aria-label="이동 보기"><svg><use href="#i-hand"/></svg></button>
<button class="tool" aria-label="확대/축소"><svg><use href="#i-zoom"/></svg></button><button class="tool" aria-label="창 확대"><svg><use href="#i-zwin"/></svg></button>
<button class="tool" aria-label="범위 확대"><svg><use href="#i-zext"/></svg></button><button class="tool" aria-label="이전"><svg><use href="#i-zprev"/></svg></button>
</div><div class="hsep"></div><div class="d-flex flex-wrap">
<button class="tool" aria-label="카메라 배치"><svg><use href="#i-person"/></svg></button><button class="tool" aria-label="둘러보기"><svg><use href="#i-eye"/></svg></button>
<button class="tool" aria-label="걷기"><svg><use href="#i-feet"/></svg></button><button class="tool" aria-label="단면"><svg><use href="#i-sect"/></svg></button>
</div>
</div>
</aside>

<main class="stage flex-grow-1 position-relative overflow-hidden">
<div class="strip"></div>
<svg viewBox="90 115 1528 894" preserveAspectRatio="xMinYMin slice" role="img" aria-label="모델">
<g shape-rendering="crispEdges" fill="none">
<path d="M398 769L330 114" stroke="#1c1c9c"/>
<path d="M398 769L1353 125" stroke="#2ca02c"/>
<path d="M398 769L1618 969" stroke="#b81d24"/>
<g stroke-dasharray="1 3"><path d="M398 769L90 719" stroke="#b81d24"/><path d="M398 769L90 978" stroke="#217a21"/><path d="M398 769L423 1009" stroke="#1c1c9c"/></g>
</g>
<path d="M566 226L840 233V585L841 739L594 705z" fill="#fff" stroke="#000" stroke-width="2.500" stroke-linejoin="round"/>
<circle cx="840" cy="232" r="29" fill="none" stroke="#e8b9b0" stroke-opacity=".22" stroke-width="2"/>
<path d="M856 412l14-9 17 3-14 8z" fill="none" stroke="#2323b0"/>
<path d="M877 412h7v8h-7z" fill="#999989" stroke="#222"/>
<path d="M862 414l14-12q4-1 4 4l-14 12z" fill="#d62027" stroke="#5b0b10" stroke-width=".8"/><path d="M859 422l3-8 4 4z" fill="#dcc" stroke="#222" stroke-width=".8"/>
</svg>
</main>

<aside class="tray d-flex flex-column">
<div class="tray-title d-flex align-items-center"><span class="me-auto">기본 트레이</span>
<button class="plain me-2" aria-label="고정"><svg width="12" height="12" viewBox="0 0 12 12"><path d="M4 1h5v6H4zM2 7h8M6 7v4M8 1v6" fill="none" stroke="#111" stroke-width="1.300"/></svg></button>
<button class="xbtn hot text-white" aria-label="닫기"><svg width="6" height="6"><use href="#i-x"/></svg></button></div>
<div class="work d-flex flex-grow-1">
<div class="tray-body d-flex flex-column">
<h2 class="section-head d-flex align-items-center"><svg width="10" height="8" class="me-2"><use href="#i-tri"/></svg><span class="me-auto">요소 정보</span><button class="xbtn" aria-label="닫기"><svg width="7" height="7"><use href="#i-x"/></svg></button></h2>
<div class="info"><div class="d-flex"><div class="rowline flex-grow-1 d-flex align-items-center"><b class="t12">선택 없음</b></div>
<button class="plain mx-2" aria-label="세부 정보"><svg width="12" height="17" viewBox="0 0 12 17"><path d="M.5.500h11v16H.5z" fill="#fff" stroke="#555"/><path d="M2 2h8L6 6zM0 8h12v9H0z"/><path d="M6 10v5M3.500 12.500h5" stroke="#fff" stroke-width="1.500"/></svg></button></div></div>
<h2 class="section-head d-flex align-items-center"><svg width="10" height="8" class="me-2"><use href="#i-tri"/></svg><span class="me-auto">재질</span><button class="xbtn" aria-label="닫기"><svg width="7" height="7"><use href="#i-x"/></svg></button></h2>
<div class="mat d-flex align-items-start">
<div class="preview"><svg width="75" height="75" class="d-block"><use href="#i-diag"/></svg></div>
<input class="matname ms-1 mt-1" value="기본값" aria-label="재질 이름" readonly>
<div class="ms-1 mt-1 d-flex flex-column align-items-center gap-2">
<button class="plain" aria-label="보조 창"><svg width="12" height="18" viewBox="0 0 12 18"><path d="M.5.500h11v17H.5z" fill="#fff" stroke="#555"/><path d="M0 0h12v9H0zM2 16h8l-4-4z"/><path d="M3 4h6v2H3z" fill="#fff"/></svg></button>
<button class="plain" aria-label="재질 만들기"><svg width="21" height="22" viewBox="0 0 21 22"><path d="M3 6l9-5 8 3-1 11-8 5-8-5z" fill="#2b2822" stroke="#111"/><path d="M4 6l9-4M8 8l9-5M12 11l8-4m-8 8l7-4" stroke="#d8d1b0" stroke-width="1.500"/><circle cx="6" cy="16" r="5.500" fill="#fff" stroke="#111"/><path d="M6 13v6M3 16h6" stroke="#111" stroke-width="1.500"/></svg></button>
<button class="plain" aria-label="기본 재질"><svg width="26" height="26"><use href="#i-diag"/></svg></button>
</div>
</div>
<div class="tabsrow d-flex t12"><a href="#" class="tab-a d-flex align-items-center">선택</a><a href="#" class="tab-b d-flex align-items-center mt-1">편집</a>
<button class="plain ms-auto me-1" aria-label="스포이트"><svg width="22" height="22" viewBox="0 0 22 22"><path d="M2 20l2-5 8-8 3 3-8 8z" fill="#d7b45b" stroke="#333"/><path d="M11 5l6 6M13 7l4-5q3-1 3 2l-4 5z" stroke="#222" stroke-width="2.500" fill="#444"/></svg></button></div>
<div class="navrow d-flex align-items-center">
<button class="plain px-1" aria-label="뒤로"><svg width="15" height="16"><use href="#i-prevn"/></svg></button>
<button class="plain px-1 ms-1" aria-label="앞으로"><svg width="15" height="16"><use href="#i-nextn"/></svg></button>
<button class="plain px-1 ms-1" aria-label="모델 내"><svg width="20" height="20"><use href="#i-home"/></svg></button>
<div class="combo d-flex mt-1"><select aria-label="재질 모음"><option>색상</option></select><span class="arrow d-flex align-items-center justify-content-center"><svg width="9" height="5"><use href="#i-tri"/></svg></span></div>
<button class="plain ms-auto" aria-label="세부 정보"><svg width="17" height="18"><use href="#i-detail"/></svg></button></div>
<div class="well well-main d-flex justify-content-between">
<div class="swatches d-flex flex-wrap" id="swatches"></div>
<div class="bar d-flex flex-column"><div class="end d-flex align-items-center justify-content-center"><svg width="10" height="6"><use href="#i-up"/></svg></div><div class="thumb"></div><div class="end d-flex align-items-center justify-content-center mt-auto"><svg width="10" height="6"><use href="#i-dn"/></svg></div></div>
</div>
<div class="splitter d-flex flex-column justify-content-center"><div></div></div>
<div class="subhead t12 px-1 d-flex align-items-center">선택</div>
<div class="navrow d-flex align-items-center">
<button class="plain px-1" aria-label="뒤로"><svg width="15" height="16"><use href="#i-prevn"/></svg></button>
<button class="plain px-1 ms-1" aria-label="앞으로"><svg width="15" height="16"><use href="#i-nextn"/></svg></button>
<button class="plain px-1 ms-1" aria-label="모델 내"><svg width="20" height="20"><use href="#i-home"/></svg></button>
<div class="combo focused d-flex mt-1"><select aria-label="재질 폴더"><option>재질</option></select><span class="arrow d-flex align-items-center justify-content-center"><svg width="9" height="5"><use href="#i-tri"/></svg></span></div>
<button class="plain ms-auto" aria-label="세부 정보"><svg width="17" height="18"><use href="#i-detail"/></svg></button></div>
<div class="well well-rest d-flex justify-content-between">
<div class="swatches d-flex flex-wrap">
<div class="sw pt-2 text-center"><svg width="36" height="40" class="mt-1"><use href="#i-folder"/></svg></div><div class="sw pt-2 text-center"><svg width="36" height="40" class="mt-1"><use href="#i-folder"/></svg></div><div class="sw pt-2 text-center"><svg width="36" height="40" class="mt-1"><use href="#i-folder"/></svg></div>
</div>
<div class="bar"><div class="end d-flex align-items-center justify-content-center"><svg width="10" height="6"><use href="#i-up"/></svg></div><div class="thumb"></div></div>
</div>
</div>
<div class="bar d-flex flex-column ms-auto"><div class="end d-flex align-items-center justify-content-center"><svg width="10" height="6"><use href="#i-up"/></svg></div><div class="thumb"></div><div class="end d-flex align-items-center justify-content-center mt-auto"><svg width="10" height="6"><use href="#i-dn"/></svg></div></div>
</div>
</aside>

<div class="caption-band"></div>
<div class="keys d-flex flex-column align-items-start"><div class="keycap">&lt;LButtonDown&gt;</div><div class="keycap">&lt;LButtonUp&gt;</div></div>
</div>

<footer class="status d-flex align-items-center flex-shrink-0">
<div class="icons d-flex">
<svg width="18" height="18" viewBox="0 0 18 18"><circle cx="9" cy="9" r="8" fill="none" stroke="#999"/><path d="M9 15q-4-6-4-8a4 4 0 018 0q0 2-4 8z" fill="#999"/></svg>
<svg width="18" height="18" viewBox="0 0 18 18"><circle cx="9" cy="9" r="8" fill="none" stroke="#111" stroke-width="1.500"/><circle cx="9" cy="4.500" r="1.700"/><path d="M6 7h6v2h-2v6H8V9H6z"/></svg>
<svg width="18" height="18" viewBox="0 0 18 18"><circle cx="9" cy="9" r="8" fill="none" stroke="#999"/><circle cx="9" cy="6" r="3.200" fill="#999"/><path d="M3 14q0-4 3-4h6q3 0 3 4-3 3-6 3t-6-3z" fill="#999"/></svg>
</div>
<span class="tick"></span>
<span class="msg me-auto">첫 번째 모서리를 선택하십시오.</span>
<span class="tick end"></span>
<label for="dims" class="msg me-2">치수</label><input id="dims" value="~ 2856mm, ~ 5095mm" class="mt-1 me-1">
</footer>
</div>
<script>
const colors=["#fbcfcf","#fa9c9c","#f66767","#f33636","#ee0404","#cc0004","#9a0004","#660004","#fddbce","#f8b29a","#f98f68","#f56a35","#f04206","#cd3208","#982706","#661a04","#fee6ce","#fbcf9b"];
document.getElementById("swatches").innerHTML=colors.map(c=>`<div class="sw"><span style="background:${c}"></span></div>`).join("");
</script>
</body>
</html>
